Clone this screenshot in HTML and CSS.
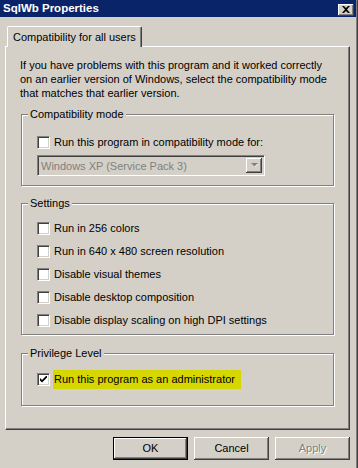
FILE: index.html
```html
<!DOCTYPE html>
<html>
<head>
<meta charset="utf-8">
<link rel="stylesheet" href="styles.css">
</head>
<body>
<div class="window">
  <div class="titlebar">
    <span class="title">SqlWb Properties</span>
    <span class="close"><svg width="8" height="7" viewBox="0 0 8 7"><path d="M0 0h2l2 2 2-2h2L5 3.5 8 7H6L4 5 2 7H0l3-3.5z" fill="#000"/></svg></span>
  </div>
  <div class="client">
    <div class="tabs"><div class="tab">Compatibility for all users</div></div>
    <div class="panel">
      <p class="intro">If you have problems with this program and it worked correctly<br>on an earlier version of Windows, select the compatibility mode<br>that matches that earlier version.</p>

      <div class="group g1">
        <span class="legend">Compatibility mode</span>
        <div class="check"><span class="box"></span><span>Run this program in compatibility mode for:</span></div>
        <div class="select">
          <span class="sel-text">Windows XP (Service Pack 3)</span>
          <span class="arrow"><svg width="7" height="5" viewBox="0 0 7 5"><path d="M1 1h6L4 4z" fill="#fff"/><path d="M0 0h7L3.5 3.5z" fill="#808080"/></svg></span>
        </div>
      </div>

      <div class="group g2">
        <span class="legend">Settings</span>
        <div class="check"><span class="box"></span><span>Run in 256 colors</span></div>
        <div class="check"><span class="box"></span><span>Run in 640 x 480 screen resolution</span></div>
        <div class="check"><span class="box"></span><span>Disable visual themes</span></div>
        <div class="check"><span class="box"></span><span>Disable desktop composition</span></div>
        <div class="check"><span class="box"></span><span>Disable display scaling on high DPI settings</span></div>
      </div>

      <div class="group g3">
        <span class="legend">Privilege Level</span>
        <div class="check"><span class="box checked"><svg width="7" height="7" viewBox="0 0 7 7"><path d="M0 2l2 2 5-5v2.5L2 6.5 0 4.5z" fill="#000"/></svg></span><span class="hl">Run this program as an administrator</span></div>
      </div>
    </div>
    <div class="buttons">
      <div class="btn default">OK</div>
      <div class="btn">Cancel</div>
      <div class="btn disabled">Apply</div>
    </div>
  </div>
</div>
</body>
</html>
```
FILE: styles.css
```css
html, body {
  margin: 0;
  padding: 0;
  background: #d4d0c8;
}
body {
  width: 358px;
  height: 468px;
  overflow: hidden;
  font-family: "Liberation Sans", Arial, sans-serif;
  font-size: 11px;
  color: #000;
}
.window {
  width: 358px;
  height: 468px;
  box-sizing: border-box;
  padding-right: 2px;
  box-shadow: inset -1px 0 0 #404040, inset -2px 0 0 #808080;
}
.titlebar {
  height: 17px;
  background: #0a246a;
  display: flex;
  align-items: center;
  justify-content: space-between;
  padding-left: 3px;
  padding-right: 2px;
}
.title {
  color: #fff;
  font-weight: bold;
  font-size: 11.5px;
  line-height: 17px;
}
.close {
  width: 16px;
  height: 12px;
  margin-top: 2px;
  box-sizing: border-box;
  background: #d4d0c8;
  display: flex;
  align-items: center;
  justify-content: center;
  box-shadow: inset -1px -1px 0 #404040, inset 1px 1px 0 #fff, inset -2px -2px 0 #808080;
}
.client {
  padding: 9px 0 0 5px;
}
.tabs {
  display: flex;
  padding-left: 2px;
  height: 20px;
  position: relative;
  z-index: 1;
}
.tab {
  height: 21px;
  box-sizing: border-box;
  padding: 0 5px 0 5px;
  line-height: 20px;
  white-space: nowrap;
  background: #d4d0c8;
  border-top: 1px solid #fff;
  border-left: 1px solid #fff;
  border-right: 1px solid #404040;
  box-shadow: inset -1px 0 0 #808080;
  border-top-left-radius: 2px;
  border-top-right-radius: 2px;
}
.panel {
  width: 345px;
  height: 384px;
  box-sizing: border-box;
  border-top: 1px solid #fff;
  border-left: 1px solid #fff;
  border-right: 1px solid #404040;
  border-bottom: 1px solid #404040;
  box-shadow: inset -1px -1px 0 #808080;
  padding: 11px 0 0 14px;
}
.intro {
  margin: 0;
  line-height: 14px;
  white-space: nowrap;
}
.group {
  position: relative;
  width: 313px;
  margin-left: 1px;
  box-sizing: border-box;
  border: 1px solid #808080;
  box-shadow: inset 1px 1px 0 #fff, 1px 1px 0 #fff;
  padding-left: 15px;
}
.legend {
  position: absolute;
  top: -7px;
  left: 6px;
  padding: 0 2px;
  line-height: 13px;
  background: #d4d0c8;
}
.g1 {
  margin-top: 14px;
  height: 72px;
  padding-top: 21px;
}
.g2 {
  margin-top: 17px;
  height: 132px;
  padding-top: 18px;
  display: flex;
  flex-direction: column;
  gap: 10px;
}
.g3 {
  margin-top: 18px;
  height: 53px;
  padding-top: 19px;
}
.check {
  display: flex;
  align-items: center;
  height: 13px;
  gap: 4px;
  line-height: 13px;
  white-space: nowrap;
}
.box {
  width: 13px;
  height: 13px;
  box-sizing: border-box;
  flex: none;
  background: #fff;
  border-top: 1px solid #808080;
  border-left: 1px solid #808080;
  border-right: 1px solid #fff;
  border-bottom: 1px solid #fff;
  box-shadow: inset 1px 1px 0 #404040, inset -1px -1px 0 #d4d0c8;
  display: flex;
  align-items: center;
  justify-content: center;
}
.hl {
  background: #d6d600;
  padding: 3px 6px 3px 1px;
  margin-left: -1px;
}
.select {
  margin-top: 6px;
  width: 228px;
  height: 21px;
  box-sizing: border-box;
  border-top: 1px solid #808080;
  border-left: 1px solid #808080;
  border-right: 1px solid #fff;
  border-bottom: 1px solid #fff;
  box-shadow: inset 1px 1px 0 #404040, inset -1px -1px 0 #d4d0c8;
  padding: 2px 2px 2px 3px;
  display: flex;
  align-items: center;
  justify-content: space-between;
}
.sel-text {
  color: #808080;
}
.arrow {
  width: 16px;
  height: 15px;
  box-sizing: border-box;
  background: #d4d0c8;
  box-shadow: inset -1px -1px 0 #404040, inset 1px 1px 0 #fff, inset -2px -2px 0 #808080;
  display: flex;
  align-items: center;
  justify-content: center;
}
.buttons {
  display: flex;
  justify-content: flex-end;
  gap: 6px;
  margin-top: 7px;
  width: 345px;
}
.btn {
  width: 75px;
  height: 23px;
  box-sizing: border-box;
  line-height: 23px;
  text-align: center;
  background: #d4d0c8;
  box-shadow: inset -1px -1px 0 #404040, inset 1px 1px 0 #fff, inset -2px -2px 0 #808080;
}
.btn.default {
  border: 1px solid #000;
  line-height: 21px;
}
.btn.disabled {
  color: #808080;
  text-shadow: 1px 1px 0 #fff;
}
```
